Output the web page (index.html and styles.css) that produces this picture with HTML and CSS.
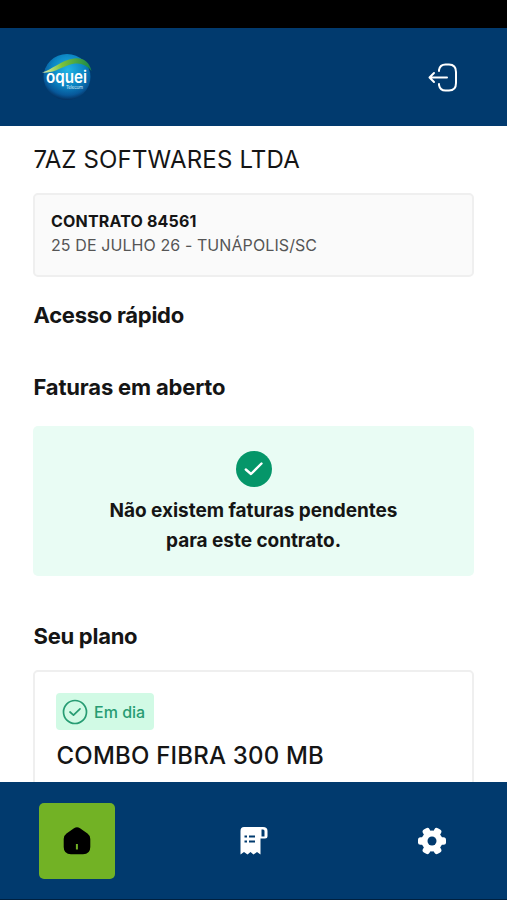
FILE: index.html
```html
<!DOCTYPE html>
<html lang="pt-BR">
<head>
<meta charset="utf-8">
<title>Oquei Telecom</title>
<link rel="stylesheet" href="styles.css">
</head>
<body>
<div class="app">
  <div class="statusbar"></div>
  <header class="header">
    <svg class="logo" width="52" height="50" viewBox="0 0 52 50">
      <defs>
        <radialGradient id="globe" cx=".52" cy=".35" r=".68">
          <stop offset="0" stop-color="#22b4e4"/>
          <stop offset=".5" stop-color="#0c86c4"/>
          <stop offset=".8" stop-color="#07589a"/>
          <stop offset="1" stop-color="#04254f"/>
        </radialGradient>
        <linearGradient id="leaf">
          <stop offset="0" stop-color="#e2efb4"/>
          <stop offset=".4" stop-color="#7cc23a"/>
          <stop offset="1" stop-color="#16864b"/>
        </linearGradient>
      </defs>
      <ellipse cx="26" cy="25" rx="23.500" ry="23" fill="url(#globe)"/>
      <path d="M1 20.500C11 18 20 8 33 6.500Q47 5 50.500 19Q44 10.500 34 11.500C23 13 13 22 1 20.500Z" fill="url(#leaf)"/>
      <text class="logo-name" x="5" y="31" textLength="41" lengthAdjust="spacingAndGlyphs">oquei</text>
      <text class="logo-sub" x="25" y="37" textLength="17">Telecom</text>
    </svg>
    <svg class="logout" width="30" height="30" viewBox="0 0 30 30">
      <path d="M11 9V8Q12 2.500 17.500 2.500H21Q28 2.500 28 10V21Q28 28.500 21 28.500H17.500Q12 28.500 11 23V22M19 15.500H1.500M6 11L1.500 15.500L6 20"/>
    </svg>
  </header>
  <main class="content">
    <h1 class="customer">7AZ SOFTWARES LTDA</h1>
    <section class="contract">
      <div class="contract-id">CONTRATO 84561</div>
      <div class="contract-address">25 DE JULHO 26 - TUNÁPOLIS/SC</div>
    </section>
    <h2 class="heading quick">Acesso rápido</h2>
    <h2 class="heading invoices">Faturas em aberto</h2>
    <section class="notice">
      <svg width="37" height="36" viewBox="0 0 37 36">
        <circle cx="19" cy="18" r="18" fill="#059669"/>
        <path d="M10.800 18.500L16 23L26.500 12.500" fill="none" stroke="#fff" stroke-width="2.400" stroke-linecap="round" stroke-linejoin="round"/>
      </svg>
      <p class="notice-text">Não existem faturas pendentes<br>para este contrato.</p>
    </section>
    <h2 class="heading plan">Seu plano</h2>
    <section class="plan-card">
      <div class="badge">
        <svg width="26" height="26" viewBox="0 0 26 26">
          <circle cx="13" cy="13" r="11.500"/>
          <path d="M8 13L11.500 16.200L18 9.800"/>
        </svg>
        <span class="badge-text">Em dia</span>
      </div>
      <div class="plan-name">COMBO FIBRA 300 MB</div>
    </section>
  </main>
  <nav class="nav">
    <a class="tab active">
      <svg width="28" height="28" viewBox="0 0 28 28">
        <path fill-rule="evenodd" d="M11 1.300Q14 -.8 17 1.300L24.500 6.500Q27.300 8.500 27.300 12V20Q27.300 27.200 20 27.200H8Q.7 27.200 .7 20V12Q.7 8.500 3.500 6.500ZM12.900 17V22.500H14.900V17Z"/>
      </svg>
    </a>
    <a class="tab">
      <svg width="30" height="30" viewBox="0 0 30 30">
        <path fill="#fff" fill-rule="evenodd" d="M5 1H24Q28.500 1 28.500 5V10Q28.500 12.500 26 12.500H21.500V28.500L18 26L14.500 28.500L11.500 26L8.500 28.500L5 26L1.500 28.500V5Q1.500 1 5 1ZM22.500 4V10.500H25.500V5Q25.500 3.500 24 3.500H22.500Z"/>
        <path d="M5.500 10.500H8M10 10.500H16M5.500 15.500H8M10 15.500H16" stroke="#013a6e" stroke-width="2"/>
      </svg>
    </a>
    <a class="tab">
      <svg width="30" height="30" viewBox="0 0 30 30">
        <g fill="#fff">
          <circle cx="15" cy="15" r="10.500"/>
          <rect x="11.200" y="1" width="7.600" height="28" rx="2.500" transform="rotate(30 15 15)"/>
          <rect x="11.200" y="1" width="7.600" height="28" rx="2.500" transform="rotate(90 15 15)"/>
          <rect x="11.200" y="1" width="7.600" height="28" rx="2.500" transform="rotate(-30 15 15)"/>
        </g>
        <circle cx="15" cy="15" r="4.500" fill="#013a6e"/>
      </svg>
    </a>
  </nav>
</div>
</body>
</html>
```
FILE: styles.css
```css
* { box-sizing: border-box; }
body { margin: 0; background: #00203f; font-family: Inter, "Liberation Sans", sans-serif; color: #151515; }
h1, h2, p { margin: 0; }
svg { display: block; flex: none; }
.app { display: flex; flex-direction: column; width: 507px; height: 900px; padding-bottom: 1px; overflow: hidden; }
.statusbar { flex: 0 0 28px; background: #000; }
.header { flex: 0 0 98px; display: flex; align-items: center; justify-content: space-between; padding: 0 49px 0 41px; background: #013a6e; }
.logo-name { font: 600 17px Inter, sans-serif; fill: #fff; }
.logo-sub { font: 4.500px Inter, sans-serif; fill: #d7edf8; }
.logout { fill: none; stroke: #fff; stroke-width: 2; stroke-linecap: round; stroke-linejoin: round; }
.content { flex: 1; min-height: 0; overflow: hidden; padding: 19px 33px 0; background: #fff; }
.customer { padding-left: .5px; font-size: 24px; line-height: 30px; font-weight: 400; letter-spacing: .16px; white-space: nowrap; }
.contract { height: 84px; margin-top: 18px; padding: 14px 16px; border: 2px solid #efefef; border-radius: 5px; background: #fafafa; }
.contract-id { font-size: 16px; line-height: 24px; font-weight: 700; letter-spacing: .18px; }
.contract-address { font-size: 16px; line-height: 24px; letter-spacing: .09px; color: #555; }
.heading { padding-left: .5px; font-size: 22px; line-height: 30px; font-weight: 700; letter-spacing: -.27px; }
.quick { margin-top: 23px; }
.invoices { margin-top: 42px; letter-spacing: -.18px; }
.notice { display: flex; flex-direction: column; align-items: center; height: 150px; margin-top: 24px; padding-top: 25px; border-radius: 5px; background: #e9fcf4; }
.notice-text { margin-top: 9px; font-size: 19px; line-height: 30px; font-weight: 700; letter-spacing: -.04px; text-align: center; white-space: nowrap; }
.plan { margin-top: 45px; }
.plan-card { height: 180px; margin-top: 19px; padding: 21px; border: 2px solid #efefef; border-radius: 5px; }
.badge { display: flex; align-items: center; gap: 6px; width: 98px; height: 37px; padding-left: 6px; border-radius: 4px; background: #d1fae5; color: #279c73; font-size: 16px; font-weight: 500; }
.badge svg { fill: none; stroke: #279c73; stroke-width: 1.700; stroke-linecap: round; stroke-linejoin: round; }
.badge-text { white-space: nowrap; }
.plan-name { margin-top: 10px; padding-left: .5px; font-size: 24px; line-height: 32px; font-weight: 500; letter-spacing: .2px; white-space: nowrap; }
.nav { flex: 0 0 117px; display: flex; justify-content: space-between; padding: 21px 37.500px 0 38.500px; background: #013a6e; }
.tab { display: flex; align-items: center; justify-content: center; width: 76px; height: 76px; border-radius: 5px; }
.active { background: #72b225; }
```
